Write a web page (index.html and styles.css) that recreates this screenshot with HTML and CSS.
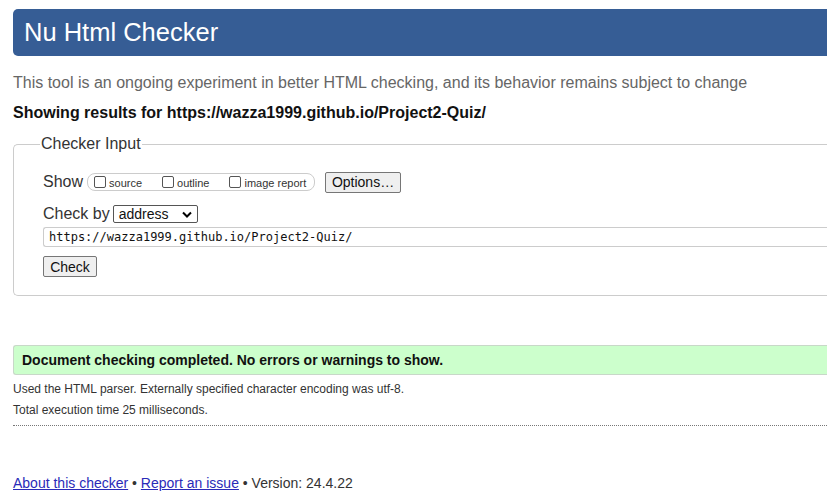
FILE: index.html
```html
<!DOCTYPE html>
<html>
<head>
<meta charset="utf-8">
<title>Nu Html Checker</title>
<link rel="stylesheet" href="styles.css">
</head>
<body>
<div class="page">
  <h1 class="header">Nu Html Checker</h1>
  <p class="intro">This tool is an ongoing experiment in better HTML checking, and its behavior remains subject to change</p>
  <p class="showing">Showing results for https://wazza1999.github.io/Project2-Quiz/</p>
  <fieldset class="input-box">
    <legend class="legend">Checker Input</legend>
    <div class="row show-row">
      <span class="label">Show</span>
      <span class="group">
        <label class="opt"><span class="cb"></span>source</label>
        <label class="opt"><span class="cb"></span>outline</label>
        <label class="opt"><span class="cb"></span>image report</label>
      </span>
      <span class="btn options">Options…</span>
    </div>
    <div class="row by-row">
      <span class="label">Check by</span>
      <span class="select">address<svg class="chev" width="10" height="7" viewBox="0 0 10 7"><path d="M1 1.5 L5 5.5 L9 1.5" fill="none" stroke="#000" stroke-width="2"/></svg></span>
    </div>
    <div class="url">https://wazza1999.github.io/Project2-Quiz/</div>
    <span class="btn check">Check</span>
  </fieldset>
  <div class="success">Document checking completed. No errors or warnings to show.</div>
  <p class="meta m1">Used the HTML parser. Externally specified character encoding was utf-8.</p>
  <p class="meta m2">Total execution time 25 milliseconds.</p>
  <hr class="dots">
  <p class="footer"><a href="#" class="link">About this checker</a> • <a href="#" class="link">Report an issue</a> • Version: 24.4.22</p>
</div>
</body>
</html>
```
FILE: styles.css
```css
html, body { margin: 0; padding: 0; overflow: hidden; background: #fff; }
body { font-family: "Liberation Sans", Arial, sans-serif; color: #222; }
.page { padding: 9px 0 0 13px; width: 840px; }
.header {
  margin: 0; height: 47px; background: #365d95; color: #fff;
  font-weight: normal; font-size: 25.5px; line-height: 47px;
  padding-left: 11px; border-radius: 5px 0 0 5px;
}
.intro { margin: 17px 0 0; font-size: 16px; line-height: 20px; color: #666; }
.showing { margin: 10px 0 0; font-size: 16px; font-weight: bold; line-height: 20px; color: #111; }
.input-box {
  margin: 11px 0 0; padding: 0 0 18px 29px; border: 1px solid #ccc; border-right: none;
  border-radius: 5px 0 0 5px; min-width: 0;
}
.legend { padding: 0 1px; margin-left: -3px; font-size: 16px; color: #333; line-height: 20px; }
.row { display: flex; align-items: center; white-space: nowrap; }
.show-row { margin-top: 17px; height: 22px; }
.label { font-size: 16px; color: #333; }
.group {
  display: flex; align-items: center; margin-left: 4px; height: 18px; box-sizing: border-box;
  border: 1px solid #ccc; border-radius: 8px; padding: 1px 4px 0 6px; width: 228px;
}
.opt { display: flex; align-items: center; font-size: 11px; color: #333; margin-right: 20px; line-height: 14px; white-space: nowrap; }
.opt:last-child { margin-right: 0; }
.cb { width: 12px; height: 12px; box-sizing: border-box; border: 1px solid #555; border-radius: 2px; margin-right: 3px; margin-top: -1px; background: #fff; }
.btn {
  display: inline-flex; align-items: center; justify-content: center;
  border: 1px solid #767676; background: #efefef; border-radius: 2px;
  font-size: 14px; color: #111; box-sizing: border-box;
}
.options { margin-left: 10px; width: 76px; height: 21px; }
.by-row { margin-top: 11px; height: 20px; }
.select {
  display: flex; align-items: center; justify-content: space-between; box-sizing: border-box;
  margin-left: 3px; width: 85px; height: 18px; border: 1px solid #555; border-radius: 2px;
  font-size: 14px; padding: 0 5px 0 5px; color: #111;
}
.chev { margin-top: 1px; }
.url {
  margin-top: 3px; height: 20px; box-sizing: border-box; border: 1px solid #ccc; border-right: none;
  border-radius: 3px 0 0 3px; font-family: "DejaVu Sans Mono", "Liberation Mono", monospace;
  font-size: 12px; line-height: 18px; padding-left: 5px; color: #111;
}
.check { margin-top: 9px; width: 54px; height: 21px; font-size: 14px; }
.success {
  margin-top: 49px; height: 30px; box-sizing: border-box; background: #ccffcc;
  border: 1px solid #c8d8c8; border-right: none; border-radius: 3px 0 0 3px;
  font-weight: bold; font-size: 14px; line-height: 28px; padding-left: 8px; color: #111;
}
.meta { margin: 0; font-size: 12px; color: #333; line-height: 21px; }
.m1 { margin-top: 4px; }
.dots { margin: 4px 0 0; border: none; border-top: 1px dotted #777; height: 0; }
.footer { margin: 47px 0 0; font-size: 14px; color: #333; line-height: 20px; }
.link { color: #2a2ab8; }
```
